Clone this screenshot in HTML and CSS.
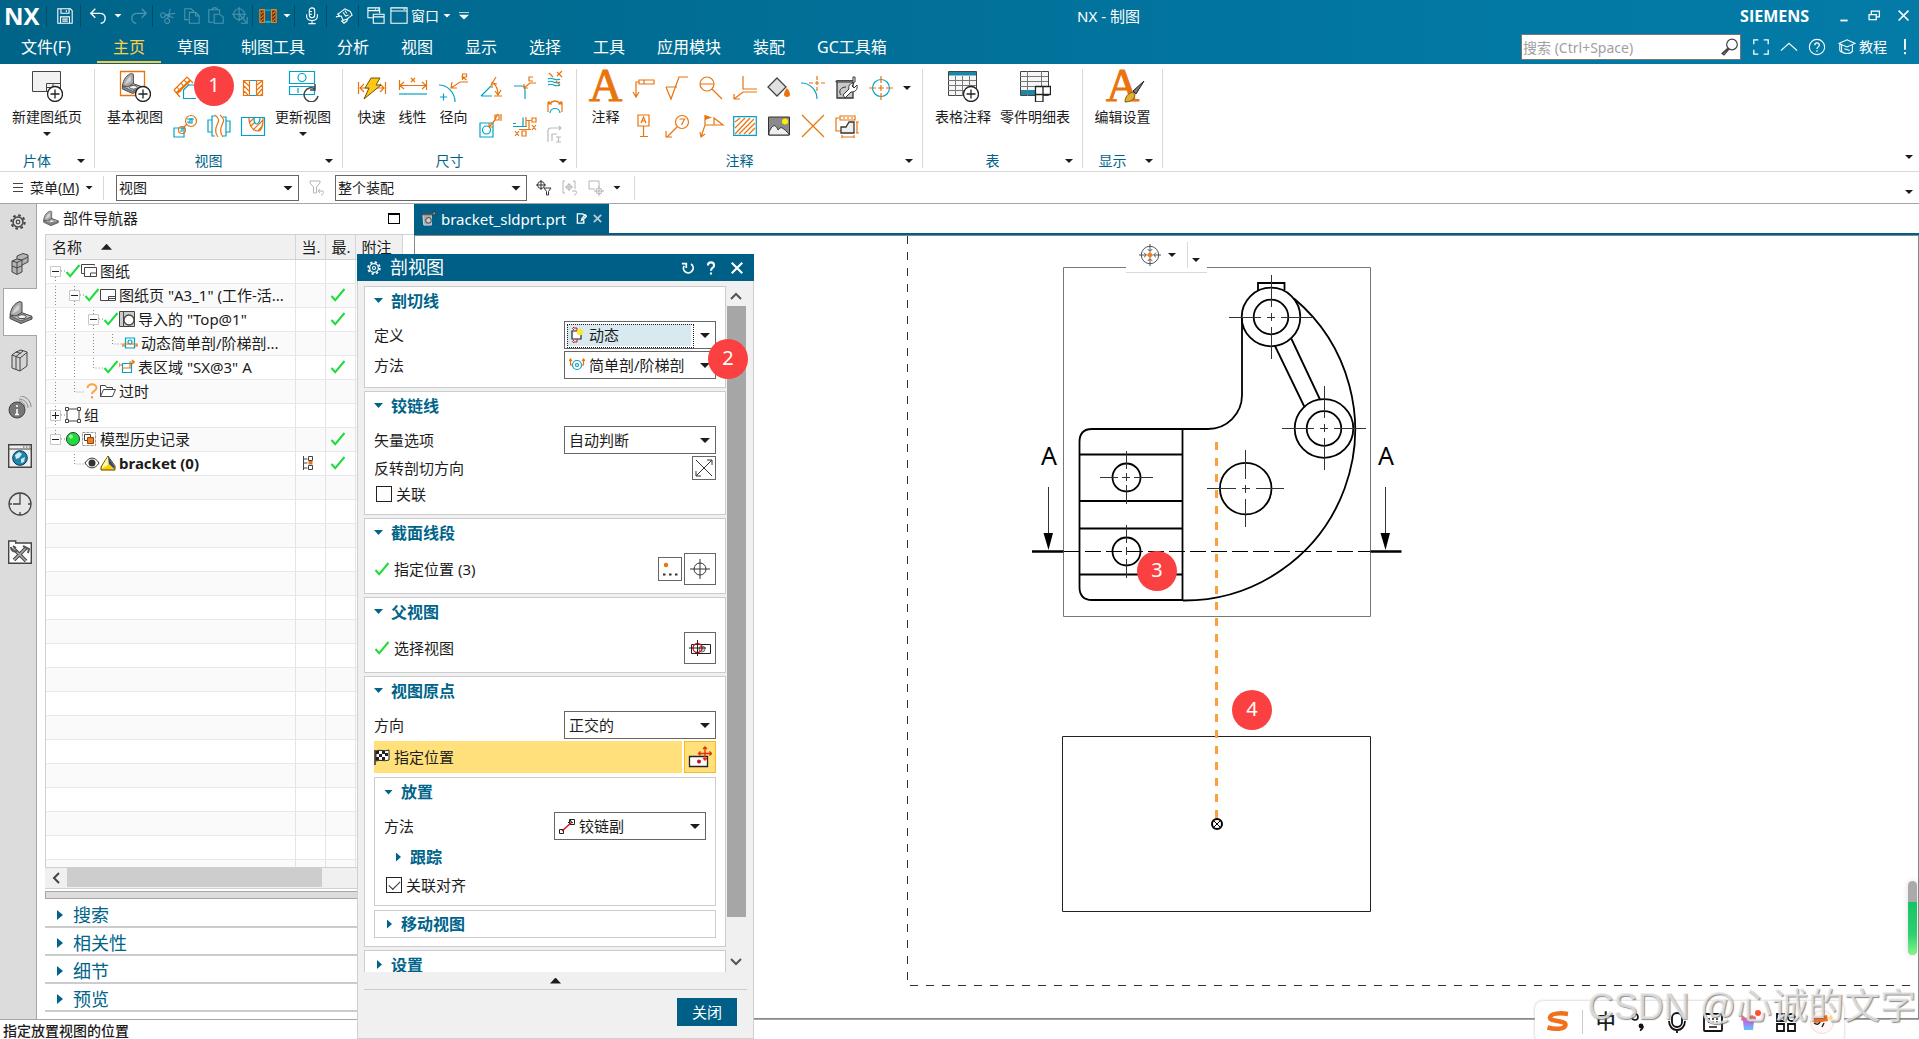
FILE: index.html
```html
<!DOCTYPE html>
<html lang="zh-CN">
<head>
<meta charset="utf-8">
<title>NX - 制图</title>
<link rel="stylesheet" href="styles.css">
</head>
<body>
<svg class="defs" aria-hidden="true">
  <symbol id="check" viewBox="0 0 16 16"><path d="M1.5 9l3.700 4.200L14.500 2" fill="none" stroke="#1fdc3c" stroke-width="2"/></symbol>
  <symbol id="bracket3d" viewBox="0 0 24 24"><path d="M1 15.500L12 12.500l11 4v2.500l-11 4.500L1 18.500z" fill="#8c8c8c" stroke="#444"/><path d="M1 15.500L12 12.500l11 4-11 4.500z" fill="#c4c4c4" stroke="#444" stroke-width=".8"/><path d="M1 15C2 8 5.500 3 11 1.500L13 2.500v10L7 16z" fill="#a8a8a8" stroke="#444"/><path d="M3.500 14C5 9 7 6 10.500 4.500L10 10z" fill="#d4d4d4"/><ellipse cx="13" cy="16.700" rx="4.200" ry="2" fill="#f4f4f4" stroke="#444"/></symbol>
  <symbol id="sheet" viewBox="0 0 16 16"><path d="M.5 2.500h15v11H.5z" fill="#fff" stroke="#444"/><path d="M8.500 13.500v-4h7M8.500 11.500h7" fill="none" stroke="#444"/></symbol>
  <symbol id="gear" viewBox="0 0 16 16"><circle cx="8" cy="8" r="5" fill="none" stroke="currentColor" stroke-width="1.500"/><circle cx="8" cy="8" r="6.700" fill="none" stroke="currentColor" stroke-width="2" stroke-dasharray="2.600 2.660"/><circle cx="8" cy="8" r="1.800" fill="none" stroke="currentColor" stroke-width="1.200"/></symbol>
  <symbol id="minus" viewBox="0 0 11 11"><path d="M.5.500h10v10H.5z" fill="#fff" stroke="#c8c8c8"/><path d="M2 5.500h7" stroke="#222"/></symbol>
  <symbol id="plus" viewBox="0 0 11 11"><path d="M.5.500h10v10H.5z" fill="#fff" stroke="#c8c8c8"/><path d="M2 5.500h7M5.500 2v7" stroke="#222"/></symbol>
</svg>

<header class="header">
  <div class="titlebar">
    <span class="logo">NX</span>
    <span class="tsep"></span>
    <button class="tool w30" aria-label="保存"><svg viewBox="0 0 20 20"><path d="M2 2h14l2 2v14H2zM5.500 2v5h9V2M5 18v-7h10v7M7 13.500h6M7 15.700h6M11.500 3.500v2"/></svg></button>
    <span class="tsep"></span>
    <button class="tool w27" aria-label="撤消"><svg viewBox="0 0 20 20"><path d="M7 2L2 7l5 5M2 7h10c4 0 6 2.500 6 5.500S16 18 13 18" stroke-width="1.500"/></svg></button>
    <span class="caret wide light"></span>
    <button class="tool w27 off" aria-label="重做"><svg viewBox="0 0 20 20"><path d="M13 2l5 5-5 5M18 7H8c-4 0-6 2.500-6 5.500S4 18 7 18" stroke-width="1.500"/></svg></button>
    <span class="tsep"></span>
    <button class="tool w24 off" aria-label="剪切"><svg viewBox="0 0 20 20"><circle cx="4.500" cy="9" r="2.700"/><circle cx="9" cy="15.500" r="2.700"/><path d="M7 9l11-2M9.500 13l3-11M7 9l9 3M9 13l4-6"/></svg></button>
    <button class="tool w24 off" aria-label="复制"><svg viewBox="0 0 20 20"><path d="M6 14H2V2h7l3 3v1M7 6h7l4 4v8H7zM14 6v4h4"/></svg></button>
    <button class="tool w24 off" aria-label="粘贴"><svg viewBox="0 0 20 20"><path d="M7 17H2V3h12v4M5 3l2-2h3l2 2M8 8h6l4 3v7H8z"/></svg></button>
    <button class="tool w24 off" aria-label="捕捉"><svg viewBox="0 0 20 20"><circle cx="9" cy="8" r="6"/><path d="M9 0v16M1 8h16M11 18h7v-7M10 9l7 8"/></svg></button>
    <span class="tsep"></span>
    <button class="tool w24" aria-label="剖视图"><svg viewBox="0 0 20 20"><path d="M1 3h5v14H1zM14 3h5v14h-5z" fill="#4a2a14" stroke="#f08020" stroke-width="1.500"/><path d="M2 8l3-3M2 12l3-3M2 16l3-3M15 8l3-3M15 12l3-3M15 16l3-3" stroke="#f08020"/><path d="M7 16.500h6" stroke="#00c0e8" stroke-width="2"/><path d="M7 3.500h6" stroke="#00c0e8"/></svg></button>
    <span class="caret wide light"></span>
    <span class="tsep"></span>
    <button class="tool w28" aria-label="语音"><svg viewBox="0 0 20 20"><rect x="7" y="1" width="6" height="11" rx="3"/><path d="M4 8v2c0 3 2 5 6 5s6-2 6-5V8M10 15v3M6 18.500h8M7 5h3M7 8h3"/></svg></button>
    <span class="tsep"></span>
    <button class="tool w28" aria-label="触控"><svg viewBox="0 0 20 20"><path d="M1 11l6-1 2 5 5-2M6 6l5-4 6 3 2 4-4 3-2 3M6 6l-3 2 2 2M9 6l3 4 3-1M11 4l2 3M7 15l3 3 4-3"/></svg></button>
    <span class="tsep"></span>
    <button class="tool w28" aria-label="切换窗口"><svg viewBox="0 0 20 20"><path d="M7 12H1V1h13v6M1 4h13M7 8h12v10H7zM7 11h12M9 2.500h1M12 2.500h1"/></svg></button>
    <button class="tool word" aria-label="窗口"><svg viewBox="0 0 20 20"><path d="M1 1h18v17H1zM1 4.500h18M15 2.500h2"/></svg><span>窗口</span></button>
    <span class="caret light"></span>
    <span class="caret light barred"></span>
    <h1 class="app-title">NX - 制图</h1>
    <strong class="brand">SIEMENS</strong>
    <button class="tool w30" aria-label="最小化"><svg viewBox="0 0 20 20"><path d="M6 15h8" stroke-width="2"/></svg></button>
    <button class="tool w30" aria-label="还原"><svg viewBox="0 0 20 20"><path d="M7 8V4.500h9V11h-4M4.500 8.500h8V14h-8z" stroke-width="1.400"/></svg></button>
    <button class="tool w30" aria-label="退出"><svg viewBox="0 0 20 20"><path d="M4 4l11 11M15 4L4 15" stroke-width="1.800"/></svg></button>
  </div>
  <div class="tabbar">
    <nav class="tabs">
      <a class="tab file" href="#">文件(F)</a><a class="tab active" href="#">主页</a><a class="tab" href="#">草图</a><a class="tab" href="#">制图工具</a><a class="tab" href="#">分析</a><a class="tab" href="#">视图</a><a class="tab" href="#">显示</a><a class="tab" href="#">选择</a><a class="tab" href="#">工具</a><a class="tab" href="#">应用模块</a><a class="tab" href="#">装配</a><a class="tab" href="#">GC工具箱</a>
    </nav>
    <div class="search">
      <input type="search" aria-label="搜索" placeholder="搜索 (Ctrl+Space)">
      <svg viewBox="0 0 18 18"><circle cx="11" cy="6.500" r="5.300"/><path d="M7 10.500L2 15.500M8 11l-5 6-2-1.500 5.500-5"/></svg>
    </div>
    <button class="tool w28" aria-label="全屏"><svg viewBox="0 0 20 20"><path d="M2 7V2h5M13 2h5v5M18 13v5h-5M7 18H2v-5" stroke-width="1.400"/></svg></button>
    <button class="tool w28" aria-label="折叠功能区"><svg viewBox="0 0 20 20"><path d="M1 14l9-8 9 8" stroke-width="1.400"/></svg></button>
    <button class="tool w28" aria-label="帮助"><svg viewBox="0 0 20 20"><circle cx="10" cy="10" r="8.500"/><path d="M7.500 8c0-3.500 5-3.500 5 0 0 1.800-2.500 2-2.500 4.200M10 13.500v1.800" stroke-width="1.400"/></svg></button>
    <button class="tool word tutor"><svg viewBox="0 0 20 20"><path d="M1 6l9-4 9 4-9 4zM4 8v7c3 3 9 3 12 0V8M2 7v7l2 2M7 12l6 2"/></svg><span>教程</span></button>
    <button class="tool alert" aria-label="警报"><svg viewBox="0 0 20 20"><path d="M10 1v12M10 15.500V18" stroke-width="2"/></svg></button>
  </div>
</header>

<section class="ribbon" aria-label="主页功能区">
  <div class="group g1">
    <div class="cmds">
      <button class="big"><svg viewBox="0 0 32 32"><path d="M1.500 1.500h28v20h-28z" fill="#f2f2f2" stroke="#444"/><path d="M15.500 21.500v-8h14M15.500 17.500h14M22 13v8" stroke="#444" fill="none"/><circle cx="24" cy="24" r="7.500" fill="#fff" stroke="#222" stroke-width="1.300"/><path d="M24 19.500v9M19.500 24h9" stroke="#222" stroke-width="1.300"/></svg><span>新建图纸页</span><i class="caret"></i></button>
    </div>
    <div class="glabel"><span>片体</span><i class="caret"></i></div>
  </div>
  <div class="group g2">
    <div class="cmds">
      <button class="big w66"><svg viewBox="0 0 32 32"><path d="M1.500 1.500h24v24h-24z" fill="#fff" stroke="#e9730c" stroke-width="1.300"/><use href="#bracket3d" x="2" y="2" width="23" height="22"/><circle cx="24" cy="24" r="7.500" fill="#fff" stroke="#222" stroke-width="1.300"/><path d="M24 19.500v9M19.500 24h9" stroke="#222" stroke-width="1.300"/></svg><span>基本视图</span></button>
      <div class="smalls">
        <button class="s" aria-label="投影视图"><svg viewBox="0 0 24 24"><path class="o" d="M1 14L14 1l6 6M1 14l6 7M4 11l4 5M8 7l3 4M11 4l5 5M4 18L17 5M3 17l14-13"/><path class="c" d="M10.500 23v-9l5-5h8M10 22.500h13"/></svg></button>
        <button class="s" aria-label="局部放大图"><svg viewBox="0 0 24 24"><circle class="o" cx="12" cy="12" r="8"/></svg></button>
        <button class="s" aria-label="剖视图"><svg viewBox="0 0 24 24"><path class="o" d="M2.500 4.500h6v15h-6zM15.500 4.500h6v15h-6zM3 5l5 5M3 10l5 5M3 15l4 4M16 9l5-4M16 14l5-5M16 19l5-6M19 20l2-2"/><path class="c" d="M9 4.500h6M9 19.500h6" stroke-width="2"/></svg></button>
        <button class="s" aria-label="局部视图"><svg viewBox="0 0 24 24"><path class="c" d="M1 14h10v9H1zM14 5h5v4h-4"/><circle class="o" cx="18" cy="7" r="5.500"/><circle class="o" cx="9" cy="16" r="3.500"/><path class="o" d="M11 13l3-3"/><path class="c" d="M14 8h3v-3h4M7 17h2v-3h3"/></svg></button>
        <button class="s" aria-label="断开视图"><svg viewBox="0 0 24 24"><path class="c" d="M8 2H5v20h3M5 6H1v12h4M16 3h3v19h-3M19 7h4v11h-4"/><path class="o" d="M8 1c5 4 4 6 2 10s-2 8 1 12M13 1c5 4 4 6 2 10s-2 8 1 12"/></svg></button>
        <button class="s" aria-label="局部剖视图"><svg viewBox="0 0 24 24"><path class="c" d="M.500 3.500h23v18H.500z"/><path class="o" d="M8 4c0 8 4 13 9 13 4 0 5-6 5-13M10 12l4-4M12 16l10-10M17 17l5-6M9 8l4-4"/><path class="c" d="M13 4c0 8 5 8 6 0"/></svg></button>
      </div>
      <button class="big w66"><svg viewBox="0 0 32 32"><path class="c" d="M2.500 1.500h25v12h-25zM2.500 16.500h25v8h-25zM11 18v5"/><circle class="c" cx="15" cy="7.500" r="4"/><path d="M28 19a7 7 0 1 0 3 7M28 14v6h-5" stroke="#444" stroke-width="1.500" fill="none"/></svg><span>更新视图</span><i class="caret"></i></button>
    </div>
    <div class="glabel"><span>视图</span><i class="caret"></i></div>
  </div>
  <div class="group g3">
    <div class="cmds">
      <button class="big w41"><svg viewBox="0 0 32 32"><path class="o" d="M2.500 12v12M29.500 12v12M4 18h24M8 14l-4 4 4 4M24 14l4 4-4 4"/><path d="M15 8h9l-4 7h5L8 29l5-11H9z" fill="#ffc61a" stroke="#6b5208"/></svg><span>快速</span></button>
      <button class="big w41"><svg viewBox="0 0 32 32"><path class="o" d="M2.500 10v10M29.500 10v10M3 15.500h26M7 12l-4 3.500 4 3.500M25 12l4 3.500-4 3.500M14 8l4 4M18 8l-4 4"/><path class="c" d="M2 24h28" stroke-width="1.600"/></svg><span>线性</span></button>
      <button class="big w41"><svg viewBox="0 0 32 32"><path class="c" d="M1 15c9 0 16 8 16 17M2 27h7M5.500 23.500v7"/><path class="o" d="M13 18l9-6h8M14 12l-1 6h6M24.500 10V4h4v3h-4l4 3"/></svg><span>径向</span></button>
      <div class="smalls two">
        <button class="s" aria-label="角度"><svg viewBox="0 0 24 24"><path class="c" d="M2 20L12 10M2 20h11"/><path class="o" d="M17 1l-5 8M15 20h8M14 7c4 3 5 7 5 12M13 12V7l5 1M16 15l3 4 3-5"/></svg></button>
        <button class="s" aria-label="倒斜角"><svg viewBox="0 0 24 24"><path class="c" d="M1 10h8c2 0 3 2 3 4v9"/><path class="o" d="M11 12l6-5h6M11 8v4h4M20 1h-4v4h4"/></svg></button>
        <button class="s" aria-label="孔标注"><svg viewBox="0 0 24 24"><path class="c" d="M1 9h13v14H1z"/><circle class="c" cx="7.500" cy="16" r="4"/><path class="o" d="M10 13l6-7M10 9v4h4M16 1h4v5h-4zM19 0l-4 7M22 0v7"/></svg></button>
        <button class="s" aria-label="坐标"><svg viewBox="0 0 24 24"><path class="c" d="M0 12.500h10v-9M0 9.500h3M10 12.500h4"/><path class="o" d="M13 3v10M6 15.500h12M16 6v9M13 6.500h5M2 17l4 5M6 17l-4 5M9 17h4v5H9zM19 4h4v4h-4zM19 11l4 5M23 11l-4 5"/></svg></button>
      </div>
      <div class="threes">
        <button class="s" aria-label="厚度"><svg viewBox="0 0 16 16"><path class="c" d="M1 8c4-3 7 3 12 0M1 14c4-3 7 3 12 0M1 11c4-3 7 3 12 0"/><path class="o" d="M2 2l4 4M13 14l-4-4M10 1l5 5M15 0l-5 5"/></svg></button>
        <button class="s" aria-label="弧长"><svg viewBox="0 0 16 16"><path class="o" d="M1 3v10M15 3v10M2 5c4-4 8-4 12 0M2 2v3h3M14 2v3h-3"/><path class="c" d="M3 14c0-6 10-6 10 0"/></svg></button>
        <button class="s" aria-label="周长"><svg viewBox="0 0 16 16"><path class="g" d="M1 15V4q0-3 3-3h10M12-1l2 2-2 2M5 14V7h5M9 10h5M9 15h5M11.500 10v5"/></svg></button>
      </div>
    </div>
    <div class="glabel"><span>尺寸</span><i class="caret"></i></div>
  </div>
  <div class="group g4">
    <div class="cmds">
      <button class="big w41"><b class="serif-a">A</b><span>注释</span></button>
      <div class="smalls eight">
        <button class="s" aria-label="特征控制框"><svg viewBox="0 0 24 24"><path class="o" d="M5 20V6h3M8 4h15v4H8zM13 4v4M2 16l3 5 3-5"/></svg></button>
        <button class="s" aria-label="表面粗糙度"><svg viewBox="0 0 24 24"><path class="o" d="M1 11h11M1 11l5 12 8-22h9"/></svg></button>
        <button class="s" aria-label="标识符号"><svg viewBox="0 0 24 24"><circle class="o" cx="8" cy="8" r="7"/><path class="o" d="M1 8h14M13 13l10 10"/></svg></button>
        <button class="s" aria-label="焊接符号"><svg viewBox="0 0 24 24"><path class="o" d="M10 0v13h14M24 16H10l-9 7M1 18v5h6"/></svg></button>
        <button class="s" aria-label="填充"><svg viewBox="0 0 24 24"><path d="M10 2l9 9-9 9-9-9z" fill="#e0e0e0" stroke="#444" stroke-width="1.300"/><path d="M20 12c4 5 4 9 0 9s-4-4 0-9z" fill="#e9730c"/></svg></button>
        <button class="s" aria-label="交点符号"><svg viewBox="0 0 24 24"><path class="c" d="M0 7c9 0 16 7 16 16"/><path class="o" d="M8 7h4M14 7h4M20 7h4M16 0v4M16 5v4M16 11v4"/></svg></button>
        <button class="s" aria-label="目标点"><svg viewBox="0 0 24 24"><path d="M2 5h16v17H2z" fill="#c8c8c8" stroke="#333" stroke-width="1.300"/><path d="M1 5h17V1h2v5H1z" fill="#fff" stroke="#333"/><path d="M22 9l-3 3-2-2 2-3c-4 0-6 3-5 6l-6 6 2 3 6-6c4 0 7-2 6-7z" fill="#fff" stroke="#333"/><path d="M6 19c-3-4 0-8 5-8" fill="none" stroke="#333"/></svg></button>
        <button class="s" aria-label="中心标记"><svg viewBox="0 0 24 24"><circle class="c" cx="12" cy="12" r="8.500"/><path class="o" d="M12 0v7M12 9v6M12 17v7M0 12h7M9 12h6M17 12h7"/></svg></button>
        <span class="more"><i class="caret"></i></span>
        <button class="s" aria-label="基准特征"><svg viewBox="0 0 24 24"><path class="o" d="M7 1h11v11H7zM12.500 12v10M9 22.500h8M10 9l2.500-6L15 9M11 7h3"/></svg></button>
        <button class="s" aria-label="符号标注"><svg viewBox="0 0 24 24"><circle class="o" cx="17" cy="8" r="6.500"/><path class="o" d="M14.500 5h5l-3 6M12 13L2 23M1 17v6h6"/></svg></button>
        <button class="s" aria-label="旗标"><svg viewBox="0 0 24 24"><path class="o" d="M2 23L6 11h18L15 4v7M6 11V1M1 18l1 5 4-3"/><path d="M6 1l7 2.500L6 6z" fill="#e9730c"/></svg></button>
        <button class="s" aria-label="剖面线"><svg viewBox="0 0 24 24"><path class="c" d="M.7 2.700h22.600v18.600H.7z" stroke-width="1.600"/><path class="o" d="M2 8l5-4M2 14L12 4M2 20L17 4M6 20L21 5M11 20L22 9M16 20l6-6"/></svg></button>
        <button class="s" aria-label="图像"><svg viewBox="0 0 24 24"><path d="M1.500 3h21v18h-21z" fill="#8a8a8a" stroke="#333"/><path d="M2 18c4-9 7-7 9-2 3-5 6-1 11 4v1H2z" fill="#f0f0f0" stroke="#333"/><circle cx="18" cy="7.500" r="3" fill="#ffee00"/></svg></button>
        <button class="s" aria-label="交叉"><svg viewBox="0 0 24 24"><path class="o" d="M1 1l22 22M23 1L1 23" stroke-width="1.600"/></svg></button>
        <button class="s" aria-label="自动中心线"><svg viewBox="0 0 24 24"><path class="o" d="M5 2h15v4H5zM4 4H1v13h5M7 23h12M7 21v3M19 21v3M22 8v11M21 8h3M21 19h3M8 4h2M12 4h2M16 4h2"/><path d="M6 19v-6h5l3-5h5v11z" fill="#eee" stroke="#333" stroke-width="1.300"/></svg></button>
      </div>
    </div>
    <div class="glabel"><span>注释</span><i class="caret"></i></div>
  </div>
  <div class="group g5">
    <div class="cmds">
      <button class="big w72"><svg viewBox="0 0 32 32"><path d="M1.500 1.500h28v24h-28z" fill="#f6f6f6" stroke="#444"/><path d="M2 2h27v3.500H2z" fill="#1a86a8"/><path d="M1 10.500h28M1 15.500h28M1 20.500h28M8.500 6v20M15.500 6v20M22.500 6v20" stroke="#777"/><circle cx="24" cy="24" r="7.500" fill="#fff" stroke="#222" stroke-width="1.300"/><path d="M24 19.500v9M19.500 24h9" stroke="#222" stroke-width="1.300"/></svg><span>表格注释</span></button>
      <button class="big w72"><svg viewBox="0 0 32 32"><path d="M1.500 1.500h28v24h-28z" fill="#f6f6f6" stroke="#444"/><path d="M2 20h20v5H2z" fill="#1a86a8"/><path d="M1 6.500h28M1 11.500h28M1 16.500h28M8.500 1v25M22.500 1v16" stroke="#777"/><path d="M16.500 24.500v-8h15v8zM16.500 24.500h7.500v7.500h-7.500zM24 16.500v8" fill="#fff" stroke="#222" stroke-width="1.300"/></svg><span>零件明细表</span></button>
    </div>
    <div class="glabel"><span>表</span><i class="caret"></i></div>
  </div>
  <div class="group g6">
    <div class="cmds">
      <button class="big"><b class="serif-a">A</b><svg class="brush" viewBox="0 0 24 24"><path d="M23 1L12 11l3 3z" fill="#777" stroke="#222"/><path d="M4 22c0-5 3-9 8-10l2 3c-1 5-5 7-10 7z" fill="#e0b030" stroke="#7a5c10"/></svg><span>编辑设置</span></button>
    </div>
    <div class="glabel"><span>显示</span><i class="caret"></i></div>
  </div>
  <i class="caret ribbon-end"></i>
</section>

<section class="selbar">
  <button class="menu-btn"><svg viewBox="0 0 12 12"><path d="M1 1.500h10M1 5.500h10M1 9.500h10" stroke="#444" fill="none"/></svg><span>菜单(<u>M</u>)</span><i class="caret"></i></button>
  <span class="vsep"></span>
  <span class="combo c183"><select aria-label="类型过滤器"><option>视图</option></select></span>
  <button class="fbtn off" aria-label="重置过滤器"><svg viewBox="0 0 16 16"><path d="M1 1h10v2L7.500 7v6h-3V7L1 3zM9 11h5c1 2 0 4-2 4M11 9l-2 2 2 2"/></svg></button>
  <span class="combo c192"><select aria-label="选择范围"><option>整个装配</option></select></span>
  <button class="fbtn" aria-label="捕捉点"><svg viewBox="0 0 16 16"><circle cx="5" cy="5" r="3.500"/><path d="M5 0v10M0 5h10M8 8h7l-2.500 3.500V15h-2v-3.500z"/></svg></button>
  <button class="fbtn off" aria-label="撤消选择"><svg viewBox="0 0 16 16"><path d="M3 1H1v12h2M11 1h2v8M10 11h4c1 2 0 4-2 4"/><circle cx="7" cy="7" r="2.500"/><path d="M7 3v8M3 7h8"/></svg></button>
  <button class="fbtn off" aria-label="矩形选择"><svg viewBox="0 0 16 16"><path d="M7 9H1V1h10v6"/><circle cx="11" cy="11" r="3"/><path d="M11 6v10M6 11h10"/></svg></button>
  <i class="caret"></i>
  <span class="vsep"></span>
  <i class="caret ribbon-end"></i>
</section>

<main class="workspace">
  <nav class="rail" aria-label="资源条">
    <button class="rail-gear" aria-label="资源条选项"><svg viewBox="0 0 16 16"><use href="#gear"/></svg></button>
    <button aria-label="装配导航器"><svg viewBox="0 0 24 24"><path d="M4 9l5-2v-3l6-2.500L20 3v7l-6 3v7l-5 2.500L4 20z" fill="#b4b4b4" stroke="#444"/><path d="M4 9l5 1.500 5-2.500 6-3M9 10.500V22M4 14l5 2 5-2.500M14 8v5M9 7l5 1" fill="none" stroke="#444"/></svg></button>
    <button class="on" aria-label="部件导航器"><svg viewBox="0 0 24 24"><use href="#bracket3d"/></svg></button>
    <button aria-label="重用库"><svg viewBox="0 0 24 24"><path d="M4 7l4-3 5-2 6 2v14l-7 5-8-3z" fill="#d4d4d4" stroke="#444"/><path d="M4 7l4 1.500v13M8 8.500L15 3M8 4l5 1.500M8 8.500l4 1.500v13M12 10l7-5.500" fill="none" stroke="#444"/></svg></button>
    <button aria-label="HD3D工具"><svg viewBox="0 0 24 24"><circle cx="9" cy="14" r="8" fill="#777" stroke="#444"/><path d="M9 9v2M9 13v5M7 18.500h4" stroke="#fff" stroke-width="1.600"/><path d="M11 3c5 0 9 4 9 9M12 0c6 0 11 5 11 11M11 5c3 0 6 3 6 6" fill="none" stroke="#888"/></svg></button>
    <button aria-label="Web浏览器"><svg viewBox="0 0 24 24"><path d="M.7.700h22.600v22.600H.7z" fill="#f0f0f0" stroke="#444" stroke-width="1.400"/><path d="M1 5h22M15 3h1.500M18 3h1.500M21 3h1" stroke="#444"/><circle cx="12" cy="14" r="7.300" fill="#1c86ac" stroke="#135"/><path d="M7 11l4-3 3 2-3 4-3 1zM13 15l4-2-1 5-3 1z" fill="#cfe9f2"/></svg></button>
    <button aria-label="历史记录"><svg viewBox="0 0 24 24"><circle cx="12" cy="12" r="11" fill="#e6e6e6" stroke="#444" stroke-width="1.300"/><path d="M12 1v11H5M1 12h3M20 12h3M12 20v3" fill="none" stroke="#444" stroke-width="1.300"/></svg></button>
    <button aria-label="角色"><svg viewBox="0 0 24 24"><path d="M.7 3V1h7v2h15.600v20.300H.7z" fill="#fff" stroke="#444" stroke-width="1.400"/><path d="M5 8l13 13M18 8L6 20" stroke="#444" stroke-width="3.600"/><path d="M5 8l13 13M18 8L6 20" stroke="#aaa" stroke-width="1.600"/><path d="M3 7c0 4 3 5 6 4M15 6l6 3-1 4M5 6l3 2" stroke="#555" stroke-width="2" fill="none"/></svg></button>
  </nav>

  <aside class="navigator">
    <div class="nav-title"><svg viewBox="0 0 24 24"><use href="#bracket3d"/></svg><h2>部件导航器</h2><button class="max" aria-label="最大化"></button></div>
    <div class="tree-wrap">
      <table class="tree">
        <colgroup><col class="col-name"><col class="col-s"><col class="col-s"><col class="col-note"></colgroup>
        <thead><tr><th>名称<i class="sort"></i></th><th>当.</th><th>最.</th><th>附注</th></tr></thead>
        <tbody>
          <tr><td><div class="n"><svg class="l0" viewBox="0 0 15 24"><path class="d" d="M5.500 12v12M11 12h4"/><use href="#minus" x="0" y="7" width="11" height="11"/></svg><svg><use href="#check"/></svg><svg viewBox="0 0 16 16"><path d="M.5 10.500v-9h13v1M.5 10.500H3M3.500 4.500h12v9h-12zM9.500 13v-3h6" fill="none" stroke="#444"/></svg><span>图纸</span></div></td><td></td><td></td><td></td></tr>
          <tr><td><div class="n"><svg class="l1" viewBox="0 0 34 24"><path class="d" d="M5.500 0v24M24.500 0v24M30 12h4"/><use href="#minus" x="19" y="7" width="11" height="11"/></svg><svg><use href="#check"/></svg><svg><use href="#sheet"/></svg><span>图纸页 "A3_1" (工作-活...</span></div></td><td></td><td class="m"><svg><use href="#check"/></svg></td><td></td></tr>
          <tr><td><div class="n"><svg class="l2" viewBox="0 0 53 24"><path class="d" d="M5.500 0v24M24.500 0v24M43.500 0v24M49 12h4"/><use href="#minus" x="38" y="7" width="11" height="11"/></svg><svg><use href="#check"/></svg><svg viewBox="0 0 16 16"><path d="M.5.500h15v15H.5z" fill="#ccc" stroke="#444"/><path d="M4.500 1v14" stroke="#444"/><circle cx="10" cy="9" r="5" fill="#fff" stroke="#444" stroke-width="1.300"/></svg><span>导入的 "Top@1"</span></div></td><td></td><td class="m"><svg><use href="#check"/></svg></td><td></td></tr>
          <tr><td><div class="n"><svg class="l3" viewBox="0 0 72 24"><path class="d" d="M5.500 0v24M24.500 0v24M43.500 0v24M62.500 0v13h9"/></svg><svg viewBox="0 0 16 16"><path class="c" d="M3.500 3h9v10h-9z" stroke-width="1.500"/><circle class="c" cx="8" cy="7" r="2"/><path class="o" d="M1 11V9h14v2M0 11h3M13 11h3" stroke-width="1.500"/></svg><span>动态简单剖/阶梯剖...</span></div></td><td></td><td></td><td></td></tr>
          <tr><td><div class="n"><svg class="l2" viewBox="0 0 53 24"><path class="d" d="M5.500 0v24M24.500 0v24M43.500 0v13h9"/></svg><svg><use href="#check"/></svg><svg viewBox="0 0 16 16"><path class="c" d="M3.500 4.500h9v9h-9z" stroke-width="1.500"/><path class="o" d="M0 6h3M0 4v4M3 9h8V3h4M13 1l2.500 2L13 5" stroke-width="1.300"/></svg><span>表区域 "SX@3" A</span></div></td><td></td><td class="m"><svg><use href="#check"/></svg></td><td></td></tr>
          <tr><td><div class="n"><svg class="l1" viewBox="0 0 34 24"><path class="d" d="M5.500 0v24M24.500 0v13h9"/></svg><svg viewBox="0 0 16 16"><path d="M3.500 5c0-5 9-5 9 0 0 3-4.500 3-4.500 6M8 13v2.500" fill="none" stroke="#ffa040" stroke-width="2"/></svg><svg viewBox="0 0 16 16"><path d="M.5 13.500v-11h5l1 2h6v2M.5 13.500l3-7h12l-3 7z" fill="#fff" stroke="#444"/></svg><span>过时</span></div></td><td></td><td></td><td></td></tr>
          <tr><td><div class="n"><svg class="l0" viewBox="0 0 15 24"><path class="d" d="M5.500 0v24M11 12h4"/><use href="#plus" x="0" y="7" width="11" height="11"/></svg><svg viewBox="0 0 16 16"><path d="M2 2h12v12H2z" fill="#fff" stroke="#444"/><path d="M.5.500h3v3h-3zM12.500.500h3v3h-3zM.5 12.500h3v3h-3zM12.500 12.500h3v3h-3z" fill="#fff" stroke="#444"/></svg><span>组</span></div></td><td></td><td></td><td></td></tr>
          <tr><td><div class="n"><svg class="l0" viewBox="0 0 15 24"><path class="d" d="M5.500 0v12M11 12h4"/><use href="#minus" x="0" y="7" width="11" height="11"/></svg><svg viewBox="0 0 16 16"><circle cx="8" cy="8" r="6.500" fill="#1fdc3c" stroke="#333"/><circle cx="6" cy="5.500" r="2" fill="#9f9"/></svg><svg viewBox="0 0 16 16"><path d="M1.500 1.500h13v13h-13z" fill="#fff" stroke="#999" stroke-dasharray="3 1"/><path d="M3.500 3.500h6v6h-6z" fill="#fff" stroke="#444"/><path d="M6.500 6.500h6v6h-6z" fill="#f08020" stroke="#a04000"/></svg><span>模型历史记录</span></div></td><td></td><td class="m"><svg><use href="#check"/></svg></td><td></td></tr>
          <tr><td><div class="n"><svg class="l1" viewBox="0 0 34 24"><path class="d" d="M24.500 0v13h9"/></svg><svg viewBox="0 0 16 16"><path d="M1 8c4-6.500 10-6.500 14 0-4 6.500-10 6.500-14 0z" fill="#fff" stroke="#333"/><circle cx="8" cy="8" r="3.500" fill="#333"/></svg><svg viewBox="0 0 16 16"><path d="M8 1l7 10v4H1v-3z" fill="#ffd000" stroke="#604800"/><path d="M8 1.500v8.500l-6 3.500v-2z" fill="#fff6b0"/><path d="M8 1.500l6.500 10v2.500L9 9z" fill="#2747a5"/></svg><strong>bracket (0)</strong></div></td><td class="m"><svg viewBox="0 0 16 16"><path d="M3.500 1v14M3.500 4h4M3.500 8h4M3.500 13h4M8.500 1.500h4v4h-4zM8.500 10.500h4v4h-4z" fill="none" stroke="#444"/><path d="M8.500 6h4v3.500h-4z" fill="#e9730c"/></svg></td><td class="m"><svg><use href="#check"/></svg></td><td></td></tr>
          <tr><td></td><td></td><td></td><td></td></tr><tr><td></td><td></td><td></td><td></td></tr><tr><td></td><td></td><td></td><td></td></tr>
          <tr><td></td><td></td><td></td><td></td></tr><tr><td></td><td></td><td></td><td></td></tr><tr><td></td><td></td><td></td><td></td></tr>
          <tr><td></td><td></td><td></td><td></td></tr><tr><td></td><td></td><td></td><td></td></tr><tr><td></td><td></td><td></td><td></td></tr>
          <tr><td></td><td></td><td></td><td></td></tr><tr><td></td><td></td><td></td><td></td></tr><tr><td></td><td></td><td></td><td></td></tr>
          <tr><td></td><td></td><td></td><td></td></tr><tr><td></td><td></td><td></td><td></td></tr><tr><td></td><td></td><td></td><td></td></tr>
          <tr><td></td><td></td><td></td><td></td></tr><tr><td></td><td></td><td></td><td></td></tr>
        </tbody>
      </table>
    </div>
    <div class="hscroll"><svg viewBox="0 0 20 20"><path d="M13 5l-5 5 5 5" fill="none" stroke="#444" stroke-width="2"/></svg><span class="hthumb"></span></div>
    <div class="splitter"></div>
    <div class="folds">
      <button class="fold">搜索</button><button class="fold">相关性</button><button class="fold">细节</button><button class="fold">预览</button>
    </div>
  </aside>

  <section class="stage">
    <div class="doc-tabs"><div class="doc-tab"><svg viewBox="0 0 16 16"><path d="M2 4h9v11H3z" fill="#aaa" stroke="#ddd"/><path d="M1 3h12V1h2v3H1z" fill="#eee" stroke="#333"/><circle cx="8" cy="10" r="3" fill="#ccc" stroke="#333"/></svg><span>bracket_sldprt.prt</span><svg class="sm" viewBox="0 0 12 12"><path d="M7 1H1.500v10h7V8M6 8l.5-2L10 2l1.500 1.500L8 7zM7 1l2 1" fill="none" stroke="#fff" stroke-width="1.500"/></svg><button aria-label="关闭文档"><svg class="sm" viewBox="0 0 12 12"><path d="M2 2l8 8M10 2l-8 8" stroke="#b8c8d0" stroke-width="2"/></svg></button></div></div>
    <div class="canvas">
      <svg class="drawing" role="img" aria-label="支架工程图">
        <g transform="translate(-415 -236)" fill="none" stroke="#000">
          <path d="M907.500 236V985.500H1930" stroke="#333" stroke-dasharray="8 8"/>
          <path d="M1063.500 267.500h307v349h-307z" stroke="#777"/>
          <g stroke-width="1.800">
            <path d="M1182.500 429H1092q-12.500 0-12.500 13v145q0 13 12.500 13H1182.500zM1079 454.500h104M1079 501h104M1079 528.500h104M1079 574.500h104"/>
            <path d="M1182.500 429H1208a34 34 0 0 0 34-34V317M1294 298.500A171 171 0 0 1 1183 600.500M1258 290v-7h26.500v7M1275 346l29.500 61M1291.500 339l28.500 60.500"/>
            <circle cx="1271" cy="317" r="29.300"/><circle cx="1271" cy="317" r="17.300"/>
            <circle cx="1324" cy="428.500" r="29.300"/><circle cx="1324" cy="428.500" r="17.300"/>
            <circle cx="1245.700" cy="488.600" r="25.800"/>
            <circle cx="1126.500" cy="477.500" r="14"/><circle cx="1126.500" cy="551.500" r="14"/>
          </g>
          <g stroke="#333">
            <path d="M1229 317.500h32M1267 317.500h8M1281 317.500h32M1271.500 275v32M1271.500 313v8M1271.500 327v32"/>
            <path d="M1282 428.500h32M1320 428.500h8M1334 428.500h32M1324.500 386v32M1324.500 424v8M1324.500 438v32"/>
            <path d="M1207 488.500h29M1242 488.500h8M1256 488.500h28M1245.500 450v29M1245.500 485v8M1245.500 499v28"/>
            <path d="M1100 477.500h18M1122 477.500h8M1134 477.500h19M1126.500 451v18M1126.500 473v8M1126.500 485v19"/>
            <path d="M1126.500 525v18M1126.500 547v8M1126.500 559v19"/>
            <path d="M1064 551.500h306" stroke="#000" stroke-dasharray="16 5"/>
          </g>
          <path d="M1032 551.500h31.500M1370.500 551.500h31" stroke-width="2.600"/>
          <path d="M1048.500 487v50M1385.500 487v50" stroke="#333"/>
          <path d="M1043.500 533h9.500l-4.500 17zM1380.500 533h9.500l-4.500 17z" fill="#000" stroke="none"/>
          <g class="mark"><text x="1049" y="465">A</text><text x="1386" y="465">A</text></g>
          <path d="M1062.500 736.500h308v175h-308z" stroke="#222"/>
          <path d="M1216.500 442V819" stroke="#ffa040" stroke-width="3" stroke-dasharray="8 8"/>
          <circle cx="1217" cy="824" r="5" stroke-width="2"/><path d="M1214 821l6 6M1220 821l-6 6"/>
        </g>
      </svg>
      <div class="float-bar"><button aria-label="捕捉点"><svg viewBox="0 0 24 24"><circle cx="12" cy="12" r="9.500" fill="none" stroke="#444"/><path d="M12 0v8M12 16v8M0 12h8M16 12h8M9.500 5.500L12 8l2.500-2.500M9.500 18.500L12 16l2.500 2.500M5.500 9.500L8 12l-2.500 2.500M18.500 9.500L16 12l2.500 2.500" fill="none" stroke="#444"/><path d="M12 8.500l3.500 3.500-3.500 3.500L8.500 12z" fill="#f08020"/></svg></button><i class="caret"></i><span class="fsep"></span><i class="caret low"></i></div>
      <div class="level"><span></span></div>
    </div>
  </section>
</main>

<footer class="status">指定放置视图的位置</footer>

<section class="dialog" role="dialog" aria-labelledby="dlg-title">
  <div class="dlg-bar"><svg viewBox="0 0 16 16"><use href="#gear"/></svg><h2 id="dlg-title">剖视图</h2>
    <button aria-label="重置"><svg viewBox="0 0 16 16"><path d="M11.500 3.500a5.500 5.500 0 1 1-8 2M1 3h5v5" fill="none" stroke="#fff" stroke-width="2"/></svg></button>
    <button aria-label="帮助"><svg viewBox="0 0 16 16"><path d="M4.500 5c0-4.500 7-4.500 7 0C11.500 8 8 7 8 11M8 13v2.500" fill="none" stroke="#fff" stroke-width="2.400"/></svg></button>
    <button class="x" aria-label="关闭对话框"><svg viewBox="0 0 16 16"><path d="M2 2l12 12M14 2L2 14" stroke="#fff" stroke-width="2.400"/></svg></button>
  </div>
  <div class="dlg-body">
    <div class="dlg-scroll">
      <fieldset class="box"><h3>剖切线</h3>
        <div class="frow"><label for="f1">定义</label><span class="combo c152 has-icon focus"><svg viewBox="0 0 16 16"><path d="M3 4h9v8H3z" fill="#fff" stroke="#222" stroke-width="1.200"/><path d="M8 4V1H5M8 12v3H5M5 0L3.500 1.500 5 3M5 13l-1.500 1.500L5 16" stroke="#d01020" fill="none"/><circle cx="11" cy="5" r="3.200" fill="#f4ec30"/></svg><select id="f1"><option>动态</option></select></span></div>
        <div class="frow"><label for="f2">方法</label><span class="combo c152 has-icon"><svg viewBox="0 0 16 16"><circle class="c" cx="8" cy="8" r="4.500"/><circle class="c" cx="8" cy="8" r="1.500"/><path class="o" d="M1.500 2v6H4M14.500 2v6H12M0 4l1.500-2L3 4M13 4l1.500-2L16 4"/></svg><select id="f2"><option>简单剖/阶梯剖</option></select></span></div>
      </fieldset>
      <fieldset class="box"><h3>铰链线</h3>
        <div class="frow"><label for="f3">矢量选项</label><span class="combo c152"><select id="f3"><option>自动判断</option></select></span></div>
        <div class="frow r24"><span>反转剖切方向</span><button class="ib" aria-label="反转剖切方向"><svg viewBox="0 0 20 20"><path d="M2 2l16 16M18 2L2 18M13 2h5v5M2 13v5h5" fill="none" stroke="#333"/></svg></button></div>
        <div class="frow r24"><label class="cb"><input type="checkbox">关联</label></div>
      </fieldset>
      <fieldset class="box"><h3>截面线段</h3>
        <div class="frow r32"><svg><use href="#check"/></svg><span>指定位置 (3)</span><button class="ib" aria-label="点对话框"><svg viewBox="0 0 20 20"><circle cx="6" cy="6" r="2.200" fill="#e9730c"/><path d="M3 15.500h2.500M9 15.500h2.500M15 15.500h2.500" stroke="#333" stroke-width="2"/></svg></button><button class="ib lg" aria-label="指定点"><svg viewBox="0 0 24 24"><circle cx="12" cy="12" r="6" fill="none" stroke="#333"/><path d="M12 2v20M2 12h20" stroke="#333"/></svg></button></div>
      </fieldset>
      <fieldset class="box"><h3>父视图</h3>
        <div class="frow r32"><svg><use href="#check"/></svg><span>选择视图</span><button class="ib lg" aria-label="选择视图"><svg viewBox="0 0 24 24"><path d="M3.500 8.500h19v9h-19z" fill="#fff" stroke="#222"/><circle cx="14" cy="13" r="3" fill="#ccc" stroke="#777"/><circle cx="9.500" cy="12" r="4.500" fill="none" stroke="#d01020" stroke-width="1.300"/><path d="M9.500 4v16M1 12h17" stroke="#222"/></svg></button></div>
      </fieldset>
      <fieldset class="box"><h3>视图原点</h3>
        <div class="frow"><label for="f4">方向</label><span class="combo c152"><select id="f4"><option>正交的</option></select></span></div>
        <div class="frow r32 hot"><div class="hot-l"><svg viewBox="0 0 16 16"><path d="M1 1v15" stroke="#333" stroke-width="1.500"/><path d="M2 2c4-2 8 1 13-1v10c-5 2-9-1-13 1z" fill="#fff" stroke="#222"/><path d="M2 2h3v3H2zM8 2h3v3H8zM5 5h3v3H5zM11 4h3v3h-3zM2 8h3v3H2zM8 8h3v3H8z" fill="#222"/></svg><span>指定位置</span></div><button class="ib lg" aria-label="指定放置位置"><svg viewBox="0 0 24 24"><path d="M1.500 11.500h18v10h-18z" fill="#fff" stroke="#222" stroke-width="1.300"/><circle cx="11" cy="16.500" r="2" fill="#d01020"/><path d="M17 2v13M10.500 8.500h13M15 4l2-2 2 2M15 13l2 2 2-2M12.500 6.500l-2 2 2 2M21.500 6.500l2 2-2 2" fill="none" stroke="#e03010" stroke-width="1.300"/></svg></button></div>
        <fieldset class="sub"><h3>放置</h3>
          <div class="frow"><label for="f5">方法</label><span class="combo c152 has-icon"><svg viewBox="0 0 16 16"><path d="M.5 11.500h4v4h-4zM10.500 1.500h5v5h-5z" fill="#fff" stroke="#222"/><path d="M3 13L13 4" stroke="#d01020" stroke-width="1.500"/><path d="M10 2l4 3M9 5l4-4" stroke="#222"/></svg><select id="f5"><option>铰链副</option></select></span></div>
          <h3 class="shut deep">跟踪</h3>
          <div class="frow r24"><label class="cb"><input type="checkbox" checked>关联对齐</label></div>
        </fieldset>
        <fieldset class="sub closed"><h3 class="shut">移动视图</h3></fieldset>
      </fieldset>
      <fieldset class="box last"><h3 class="shut">设置</h3></fieldset>
    </div>
    <div class="vscroll"><svg viewBox="0 0 20 20"><path d="M5 13l5-5 5 5" fill="none" stroke="#555" stroke-width="2"/></svg><span class="vthumb"></span><svg viewBox="0 0 20 20"><path d="M5 7l5 5 5-5" fill="none" stroke="#555" stroke-width="2"/></svg></div>
  </div>
  <div class="fold-up"><i></i></div>
  <div class="dlg-foot"><button class="primary">关闭</button></div>
</section>

<div class="badge p1">1</div><div class="badge p2">2</div><div class="badge p3">3</div><div class="badge p4">4</div>

<div class="ime">
  <svg class="sogou" viewBox="0 0 24 20"><path d="M22 2C15 .8 4.500 1 4 5.500 3.600 10 20 8 19.500 13c-.4 4.500-11 4.500-18 2.500" fill="none" stroke="#f0701c" stroke-width="4.500"/></svg>
  <span class="isep"></span><span class="zh">中</span>
  <svg viewBox="0 0 24 24"><circle cx="7" cy="7" r="3" fill="none" stroke="#111" stroke-width="1.600"/><circle cx="13" cy="16" r="2.400" fill="#111"/><path d="M15 16q0 3-3 4.500" stroke="#111" stroke-width="1.600" fill="none"/></svg>
  <svg viewBox="0 0 24 24"><rect x="7" y="3" width="10" height="14" rx="5" fill="none" stroke="#111" stroke-width="1.800"/><path d="M4 11c0 12 16 12 16 0M12 20v3" fill="none" stroke="#111" stroke-width="1.800"/></svg>
  <svg viewBox="0 0 24 24"><rect x="3" y="4" width="18" height="17" rx="1" fill="none" stroke="#111" stroke-width="1.800"/><path d="M7 9h2M11 9h2M15 9h2M7 12h2M11 12h2M15 12h2M8 17h8" stroke="#111" stroke-width="1.600"/></svg>
  <svg viewBox="0 0 24 24"><defs><linearGradient id="cup" x1="0" y1="0" x2="0" y2="1"><stop offset="0" stop-color="#ff6a50"/><stop offset=".5" stop-color="#b070f0"/><stop offset="1" stop-color="#60c8ff"/></linearGradient></defs><path d="M5 5l4 3 6-3 4 2v3l-2 1-1 9H7L6 11l-2-1z" fill="url(#cup)"/><circle cx="21" cy="3" r="3" fill="#ff5030"/></svg>
  <svg viewBox="0 0 24 24"><path d="M3 4h7v7H3zM3 14h7v7H3zM14 14h7v7h-7z" fill="none" stroke="#111" stroke-width="1.800"/><circle cx="17.500" cy="7.500" r="3.500" fill="none" stroke="#111" stroke-width="1.800"/></svg>
  <svg viewBox="0 0 24 24"><circle cx="12" cy="12" r="11.500" fill="#fff8f6" stroke="#f0dcd8"/><path d="M3 8l14-3 1 6-13 2z" fill="#f46a20"/><path d="M18 8l4-3v7z" fill="#ffe040"/><path d="M4 13q4 3 6-1M12 17l2-4" stroke="#222" fill="none" stroke-width="1.500"/></svg>
</div>
<div class="watermark">CSDN @心诚的文字</div>
</body>
</html>
```
FILE: styles.css
```css
* { box-sizing: border-box; }
body {
  margin: 0; height: 100vh; display: flex; flex-direction: column; overflow: hidden; position: relative;
  font: 14px/20px "Noto Sans", "Noto Sans CJK SC", sans-serif; color: #1c1c1c; background: #fff;
}
button, input, select { font: inherit; color: inherit; }
button { border: 0; padding: 0; background: none; }
h1, h2, h3 { margin: 0; font-weight: 400; }
fieldset { margin: 0; padding: 0; border: 0; min-width: 0; }
.defs { position: absolute; width: 0; height: 0; }
.o, .c, .g { fill: none; stroke: #e9730c; stroke-width: 1.200; }
.c { stroke: #00a3c7; }
.g { stroke: #bbb; }

.caret { display: block; flex: none; width: 8px; height: 4px; background: #1c1c1c; clip-path: polygon(0 0, 100% 0, 50% 100%); }
.caret.light { background: #fff; }
.caret.wide { margin: 0 3px; }

/* header */
.header { flex: none; height: 64px; color: #fff; background: linear-gradient(90deg, #006488, #0279a4 80%, #047ba6); }
.titlebar { display: flex; align-items: center; height: 31px; position: relative; }
.logo { width: 46px; padding-left: 4px; font: 700 24px/32px "Open Sans", sans-serif; }
.tsep { flex: none; width: 1px; height: 22px; background: #004d6b; margin-right: 3px; }
.tool { display: flex; align-items: center; justify-content: center; height: 28px; flex: none; color: #fff; }
.tool svg { width: 18px; height: 18px; fill: none; stroke: #fff; stroke-width: 1.200; }
.tool.off { opacity: .3; }
.w24 { width: 24px; } .w27 { width: 27px; } .w28 { width: 28px; } .w30 { width: 30px; }
.word { gap: 3px; margin-right: 4px; }
.barred { height: 8px; margin-left: 8px; width: 10px; clip-path: polygon(0 0, 100% 0, 100% 15%, 0 15%, 0 40%, 100% 40%, 50% 100%, 0 40%); }
.app-title { position: absolute; left: 0; right: 0; text-align: center; padding-left: 298px; font-size: 15px; line-height: 30px; pointer-events: none; }
.brand { margin-left: auto; margin-right: 20px; font: 700 16px/32px "Open Sans", sans-serif; }
.tabbar { display: flex; align-items: center; height: 32px; }
.tabs { display: flex; flex: 1; }
.tab { color: #fff; text-decoration: none; font-size: 16px; line-height: 28px; padding: 1px 16px 0; border-bottom: 2px solid transparent; white-space: nowrap; }
.tab.file { margin: 0 10px 0 5px; }
.tab.active { color: #ffd04a; border-color: #ffc83c; }
.search { position: relative; width: 220px; margin-right: 6px; color: #1c1c1c; }
.search input { display: block; width: 100%; height: 26px; border: 1px solid #777; background: #fff; padding: 0 26px 0 1px; outline: 0; appearance: none; }
.search input::placeholder { color: #a0a0a0; opacity: 1; }
.search svg { position: absolute; right: 2px; top: 4px; width: 18px; height: 18px; fill: none; stroke: #444; stroke-width: 1.200; }
.tutor { margin-left: 7px; }
.alert { width: 28px; }

/* ribbon */
.ribbon { flex: none; display: flex; height: 108px; padding: 5px 0 3px; border-bottom: 1px solid #d9d9d9; position: relative; }
.group { display: flex; flex-direction: column; justify-content: space-between; border-right: 1px solid #d9d9d9; }
.cmds { display: flex; height: 72px; }
.g1 { width: 95px; } .g2 { width: 248px; } .g3 { width: 234px; } .g4 { width: 346px; } .g5 { width: 160px; } .g6 { width: 80px; }
.g1 .big, .g6 .big { width: 100%; }
.g2 .cmds { padding-left: 7px; } .g3 .cmds, .g4 .cmds { padding-left: 8px; } .g5 .cmds { padding-left: 4px; }
.big { display: flex; flex-direction: column; align-items: center; position: relative; white-space: nowrap; }
.big svg { width: 32px; height: 32px; margin-top: 1px; }
.big span { line-height: 20px; margin: 5px 0; }
.w66 { width: 66px; } .w41 { width: 41px; } .w72 { width: 72px; }
.smalls { display: grid; grid-template-columns: repeat(3, 34px); grid-template-rows: 38px 38px; }
.smalls.two { grid-template-columns: repeat(2, 34px); }
.smalls.eight { grid-template-columns: repeat(8, 34px) 18px; }
.s { display: flex; align-items: center; justify-content: center; }
.s svg { width: 24px; height: 24px; overflow: visible; }
.more { display: flex; align-items: center; justify-content: center; }
.threes { display: grid; grid-template-rows: repeat(3, 28px); width: 26px; margin-top: -4px; }
.threes svg { width: 16px; height: 16px; }
.serif-a { height: 33px; font: 400 46px/33px "Liberation Serif", serif; color: #e9730c; -webkit-text-stroke: 1px #e9730c; }
.big .brush { position: absolute; left: 38px; top: 10px; width: 24px; height: 24px; }
.glabel { display: flex; align-items: center; color: #00648a; line-height: 18px; margin-bottom: -2px; }
.glabel span { flex: 1; text-align: center; margin-right: 3px; }
.glabel .caret { margin-right: 9px; }
.ribbon-end { margin: auto 6px 9px auto; }

.selbar { flex: none; display: flex; align-items: center; height: 32px; border-bottom: 1px solid #a6a6a6; }
.menu-btn { display: flex; align-items: center; padding-left: 12px; width: 103px; }
.menu-btn svg { width: 12px; height: 12px; margin-right: 6px; }
.menu-btn .caret { margin-left: 6px; }
.vsep { width: 1px; height: 24px; background: #d9d9d9; margin-right: 12px; }
.combo { display: block; position: relative; }
.combo select { display: block; width: 100%; height: 28px; padding: 0 24px 0 4px; border: 1px solid #666; border-radius: 0; background: #fff; appearance: none; outline: 0; }
.combo::after { content: ""; position: absolute; right: 6px; top: 12px; width: 10px; height: 5px; background: #1c1c1c; clip-path: polygon(0 0, 100% 0, 50% 100%); pointer-events: none; }
.c183 { width: 183px; } .c192 { width: 192px; margin-right: 4px; } .c152 { width: 152px; }
.selbar .combo select { height: 26px; padding-left: 2px; }
.selbar .combo::after { top: 11px; }
.fbtn { display: flex; justify-content: center; width: 26px; }
.combo + .fbtn { margin: 0 5px 0 5px; }
.c192 + .fbtn { margin: 0; }
.fbtn svg { width: 16px; height: 16px; fill: none; stroke: #333; }
.fbtn.off svg { stroke: #b4b4b4; }
.fbtn + .caret { margin: 0 13px 0 4px; }

/* workspace */
.workspace { flex: 1; min-height: 0; display: flex; }
.rail { width: 37px; flex: none; background: #dcdcdc; border-right: 1px solid #a6a6a6; display: flex; flex-direction: column; }
.rail button { height: 48px; display: flex; align-items: center; justify-content: center; margin-left: 3px; flex: none; }
.rail .rail-gear { height: 36px; margin: 0; color: #444; }
.rail svg { width: 24px; height: 24px; }
.rail .rail-gear svg { width: 16px; height: 16px; }
.rail .on { background: #fff; border: 1px solid #a6a6a6; border-right: 0; margin-right: -1px; }

.navigator { width: 377px; flex: none; display: flex; flex-direction: column; padding-left: 8px; }
.nav-title { display: flex; align-items: center; height: 30px; flex: none; padding: 0 14px 2px 0; margin-left: -2px; }
.nav-title svg { width: 16px; height: 16px; }
.nav-title h2 { flex: 1; font-size: 15px; margin-left: 4px; }
.max { width: 12px; height: 11px; border: 1px solid #000; border-top-width: 2px; }
.tree-wrap { flex: 1; min-height: 0; overflow: hidden; border: 1px solid #d0d0d0; border-right: 0; }
.tree { width: 356px; table-layout: fixed; border-collapse: collapse; font-size: 15px; }
.col-name { width: 249px; } .col-s { width: 30px; } .col-note { width: 47px; }
.tree th { height: 24px; padding: 0 0 0 6px; text-align: left; font-weight: 400; background: #f0f0f0; border-right: 1px solid #d4d4d4; border-bottom: 1px solid #d0d0d0; white-space: nowrap; overflow: hidden; }
.sort { display: inline-block; width: 11px; height: 6px; margin: 0 0 3px 19px; background: #222; clip-path: polygon(50% 0, 100% 100%, 0 100%); }
.tree td { height: 24px; padding: 0; border-right: 1px solid #e4e4e4; border-bottom: 1px solid #e8e8e8; overflow: hidden; }
.tree tbody tr:nth-child(even) { background: #fafafa; }
.n { display: flex; align-items: center; height: 23px; padding-left: 4px; white-space: nowrap; }
.n svg { width: 16px; height: 16px; flex: none; }
.n .l0, .n .l1, .n .l2, .n .l3 { height: 24px; width: 15px; }
.n .l1 { width: 34px; } .n .l2 { width: 53px; } .n .l3 { width: 72px; }
.n span, .n strong { margin-left: 3px; }
.d { fill: none; stroke: #888; stroke-dasharray: 1 2; }
.m svg { display: block; width: 16px; height: 16px; margin: 0 0 0 4px; }
.hscroll { flex: none; display: flex; height: 21px; background: #f0f0f0; border-bottom: 1px solid #d0d0d0; }
.hscroll svg { width: 22px; height: 20px; }
.hthumb { width: 255px; height: 19px; background: #cdcdcd; }
.splitter { flex: none; height: 8px; margin: 2px 0 1px; border: 1px solid #a6a6a6; background: #dcdcdc; }
.folds { flex: none; padding-bottom: 7px; }
.fold { display: flex; align-items: center; width: 100%; height: 28px; border-bottom: 2px solid #ccc; padding: 4px 0 0 12px; font-size: 18px; color: #00648a; }
.fold::before { content: ""; width: 6px; height: 10px; margin-right: 10px; background: #00648a; clip-path: polygon(0 0, 100% 50%, 0 100%); }

.stage { flex: 1; min-width: 0; display: flex; flex-direction: column; }
.doc-tabs { flex: none; display: flex; border-bottom: 2px solid #005f87; height: 31px; }
.doc-tab { display: flex; align-items: center; width: 195px; padding: 0 6px 0 7px; background: #005f87; color: #fff; font-size: 15px; }
.doc-tab svg { width: 15px; height: 15px; }
.doc-tab span { margin: 0 10px 0 5px; }
.doc-tab .sm { width: 11px; height: 11px; flex: none; }
.doc-tab button { margin-left: auto; display: flex; }
.canvas { position: relative; flex: 1; min-height: 0; border: 1px solid #888; overflow: hidden; }
.drawing { display: block; width: 100%; height: 100%; }
.mark text { font-size: 25px; fill: #000; stroke: none; text-anchor: middle; }
.float-bar { position: absolute; left: 711px; top: 0; width: 81px; height: 37px; display: flex; align-items: center; background: #fff; border-bottom: 1px solid #d9d9d9; padding: 2px 0 0 13px; gap: 7px; }
.float-bar button { width: 22px; height: 22px; }
.float-bar svg { width: 22px; height: 22px; display: block; }
.fsep { width: 1px; height: 26px; background: #d9d9d9; margin-left: 4px; }
.float-bar .low { margin: 10px 0 0 -3px; }
.level { position: absolute; right: 1px; bottom: 63px; width: 9px; height: 74px; border-radius: 5px; background: #aaa; overflow: hidden; box-shadow: 0 0 6px #ddd; padding-top: 21px; }
.level span { display: block; height: 53px; background: linear-gradient(#16c368, #2cd070 60%, #86f586); }
.status { flex: none; height: 20px; border-top: 1px solid #a6a6a6; padding-left: 3px; font-weight: 500; line-height: 22px; }

/* floating dialog */
.dialog { position: absolute; left: 357px; top: 254px; bottom: 0; width: 397px; display: flex; flex-direction: column; background: #f0f0f0; border: 1px solid #d0d0d0; border-top: 0; font-size: 15px; }
.dlg-bar { flex: none; display: flex; align-items: center; height: 27px; margin: 0 -1px; padding: 0 10px; background: #005f87; color: #fff; }
.dlg-bar svg { width: 14px; height: 14px; display: block; }
.dlg-bar h2 { flex: 1; margin-left: 9px; font-size: 18px; line-height: 27px; }
.dlg-bar button { margin-left: 9px; }
.dlg-bar .x { margin-left: 12px; }
.dlg-body { flex: 1; min-height: 0; display: flex; padding: 5px 7px 0 6px; }
.dlg-scroll { flex: 1; overflow: hidden; display: flex; flex-direction: column; gap: 3px; }
.box { flex: none; background: #fff; border: 1px solid #ccc; padding: 0 9px 8px; }
.box h3 { display: flex; align-items: center; height: 27px; margin: 0 0 7px; font-size: 16px; font-weight: 700; color: #00648a; }
.box h3::before { content: ""; width: 9px; height: 5px; margin-right: 8px; background: #00648a; clip-path: polygon(0 0, 100% 0, 50% 100%); }
.box h3.shut::before { width: 5px; height: 9px; margin: 0 9px 0 3px; clip-path: polygon(0 0, 100% 50%, 0 100%); }
.last { height: 34px; }
.frow { display: flex; align-items: center; min-height: 28px; margin-bottom: 2px; }
.frow:last-child { margin-bottom: 0; }
.frow .combo { margin-left: auto; }
.r24 { min-height: 24px; } .r32 { min-height: 32px; }
.frow > svg, .hot-l svg { width: 16px; height: 16px; margin-right: 4px; }
.has-icon > svg { position: absolute; left: 5px; top: 6px; width: 16px; height: 16px; }
.has-icon select { padding-left: 24px; padding-right: 8px; }
.focus select { background: linear-gradient(#d8e9ef, #d8e9ef) 2px 2px / 124px 22px no-repeat #fff; }
.focus::before { content: ""; position: absolute; left: 3px; top: 3px; width: 125px; height: 22px; border: 1px dotted #222; pointer-events: none; }
.focus > svg { z-index: 1; }
.ib { width: 24px; height: 24px; border: 1px solid #666; background: #fff; margin-left: auto; display: flex; align-items: center; justify-content: center; }
.ib svg { width: 20px; height: 20px; }
.ib.lg { width: 32px; height: 32px; }
.ib.lg svg { width: 24px; height: 24px; }
.ib + .ib { margin-left: 2px; }
.hot-l { flex: 1; display: flex; align-items: center; height: 32px; margin-right: 2px; background: #ffe07a; }
.hot .ib { background: #ffe07a; border-color: #ffb820; }
.cb { display: flex; align-items: center; padding-left: 2px; }
.cb input { appearance: none; width: 16px; height: 16px; margin: 0 4px 0 0; border: 1px solid #222; background: #fff; }
.cb input:checked::after { content: ""; display: block; width: 10px; height: 5px; margin: 3px 0 0 2px; border: solid #333; border-width: 0 0 1px 1px; transform: rotate(-45deg); }
.sub { border: 1px solid #ccc; padding: 0 9px 8px; margin-top: 4px; }
.sub h3 { height: 28px; margin-bottom: 6px; }
.sub h3.deep { height: 26px; margin: 4px 0 3px 9px; }
.sub.closed { padding-bottom: 0; }
.sub.closed h3 { height: 26px; margin: 0; }
.vscroll { width: 20px; display: flex; flex-direction: column; align-items: center; }
.vscroll svg { width: 20px; height: 20px; flex: none; }
.vthumb { width: 19px; height: 611px; background: #a6a6a6; margin-bottom: auto; }
.fold-up { flex: none; height: 18px; margin: 0 6px; border-bottom: 1px solid #ccc; display: flex; justify-content: center; align-items: center; }
.fold-up i { width: 11px; height: 6px; background: #1c1c1c; clip-path: polygon(50% 0, 100% 100%, 0 100%); }
.dlg-foot { flex: none; display: flex; justify-content: flex-end; padding: 8px 16px 12px 0; }
.primary { width: 60px; height: 28px; background: #005f87; color: #fff; }

/* overlays */
.badge { position: absolute; width: 40px; height: 40px; border-radius: 50%; background: #fa4040; color: #fff; font-size: 20px; line-height: 38px; text-align: center; }
.p1 { left: 194px; top: 66px; } .p2 { left: 708px; top: 339px; } .p3 { left: 1137px; top: 551px; } .p4 { left: 1232px; top: 690px; }
.ime { position: absolute; right: 75px; bottom: -4px; height: 42px; width: 309px; display: flex; align-items: center; justify-content: space-between; padding: 0 10px 0 11px; background: #fff; border-radius: 8px; box-shadow: 0 0 3px #bbb; }
.ime svg { width: 24px; height: 24px; }
.isep { width: 1px; height: 24px; background: #ccc; }
.zh { font-size: 20px; font-weight: 500; }
.watermark { position: absolute; right: 3px; bottom: 8px; font: 36px/48px "Liberation Sans", "Noto Sans CJK SC", sans-serif; color: rgba(235, 235, 235, .8); text-shadow: 1px 1px 1px rgba(110, 110, 110, .8); white-space: nowrap; }
```
